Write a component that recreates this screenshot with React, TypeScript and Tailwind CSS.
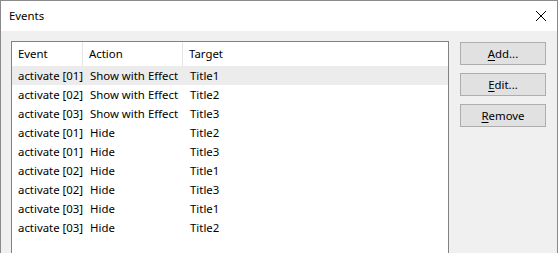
import React from "react";

const rows: [string, string, string][] = [
  ["activate [01]", "Show with Effect", "Title1"],
  ["activate [02]", "Show with Effect", "Title2"],
  ["activate [03]", "Show with Effect", "Title3"],
  ["activate [01]", "Hide", "Title2"],
  ["activate [01]", "Hide", "Title3"],
  ["activate [02]", "Hide", "Title1"],
  ["activate [02]", "Hide", "Title3"],
  ["activate [03]", "Hide", "Title1"],
  ["activate [03]", "Hide", "Title2"],
];

function Btn({ first, rest }: { first: string; rest: string }) {
  return (
    <div className="h-[23px] w-[86px] flex items-center justify-center bg-[#e1e1e1] border border-[#adadad] text-[11.4px] text-black">
      <span className="underline underline-offset-2">{first}</span>
      <span>{rest}</span>
    </div>
  );
}

export default function App() {
  return (
    <div
      className="w-[558px] h-[253px] overflow-hidden border-l border-r border-t border-[#8a8a8a] flex flex-col"
      style={{ fontFamily: '"Noto Sans", "Open Sans", sans-serif' }}
    >
      <div className="h-[30px] shrink-0 bg-white flex items-center justify-between pl-[8px] pr-[8px]">
        <span className="text-[11.4px] text-black">Events</span>
        <svg width="12" height="12" viewBox="0 0 12 12" className="mr-[2px]">
          <path d="M1 1 L11 11 M11 1 L1 11" stroke="#000" strokeWidth="1" fill="none" />
        </svg>
      </div>
      <div className="flex-1 bg-[#f0f0f0] flex pl-[10px] pt-[10px] pr-[10px] gap-[11px]">
        <div className="w-[438px] h-[240px] shrink-0 bg-white border border-[#828282] text-[11.4px] text-black">
          <div className="h-[24px] flex items-center">
            <div className="w-[71px] h-full flex items-center pl-[6px] border-r border-[#e5e5e5]">Event</div>
            <div className="w-[100px] h-full flex items-center pl-[6px] border-r border-[#e5e5e5]">Action</div>
            <div className="flex-1 h-full flex items-center pl-[6px]">Target</div>
          </div>
          {rows.map((r, i) => (
            <div
              key={i}
              className={`h-[19px] flex items-center ${i === 0 ? "bg-[#ececec]" : ""}`}
            >
              <div className="w-[72px] pl-[6px] whitespace-nowrap">{r[0]}</div>
              <div className="w-[100px] pl-[6px] whitespace-nowrap">{r[1]}</div>
              <div className="flex-1 pl-[6px] whitespace-nowrap">{r[2]}</div>
            </div>
          ))}
        </div>
        <div className="flex flex-col gap-[8px] pt-[1px]">
          <Btn first="A" rest="dd..." />
          <Btn first="E" rest="dit..." />
          <Btn first="R" rest="emove" />
        </div>
      </div>
    </div>
  );
}
